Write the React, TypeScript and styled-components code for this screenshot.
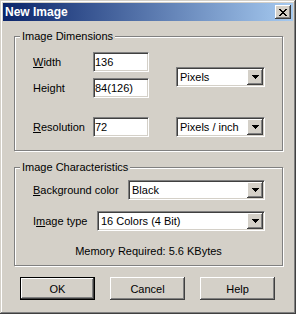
import React from "react";
import styled, { createGlobalStyle } from "styled-components";

const Global = createGlobalStyle`
  html, body { margin: 0; padding: 0; background: #D4D0C8; }
  body {
    font-family: "Liberation Sans", Arial, sans-serif;
    font-size: 11px;
    color: #000;
  }
`;

const raised = `
  box-shadow: inset -1px -1px #404040, inset 1px 1px #ffffff,
    inset -2px -2px #808080, inset 2px 2px #D4D0C8;
`;

const Window = styled.div`
  box-sizing: border-box;
  width: 296px;
  height: 314px;
  padding: 3px;
  background: #D4D0C8;
  box-shadow: inset -1px -1px #404040, inset 1px 1px #D4D0C8,
    inset -2px -2px #808080, inset 2px 2px #ffffff;
  display: flex;
  flex-direction: column;
`;

const TitleBar = styled.div`
  height: 18px;
  flex: none;
  display: flex;
  align-items: center;
  justify-content: space-between;
  padding: 0 2px;
  background: linear-gradient(to right, #0a246a, #a6caf0);
`;

const Title = styled.span`
  color: #fff;
  font-weight: bold;
  font-size: 12px;
  line-height: 14px;
`;

const CloseButton = styled.button`
  width: 16px;
  height: 14px;
  padding: 0;
  border: none;
  background: #D4D0C8;
  ${raised}
  display: flex;
  align-items: center;
  justify-content: center;
`;

const Body = styled.div`
  flex: 1;
  display: flex;
  flex-direction: column;
  padding: 9px 10px 0 11px;
`;

const Group = styled.fieldset<{ $gap?: number }>`
  margin: ${(p) => p.$gap ?? 0}px 0 0 0;
  padding: 0;
  min-width: 0;
  width: 269px;
  box-sizing: border-box;
  border: 1px solid #808080;
  box-shadow: inset 1px 1px #ffffff, 1px 1px #ffffff;
`;

const Legend = styled.legend`
  padding: 0 2px;
  margin-left: 5px;
  line-height: 13px;
  background: #D4D0C8;
`;

const DimGrid = styled.div`
  display: grid;
  grid-template-columns: 60px 56px 27px 89px;
  grid-template-rows: 20px 6px 20px 19px 20px;
  grid-template-areas:
    "wl wi . pc"
    ".  .  . pc"
    "hl hi . pc"
    ".  .  . ."
    "rl ri . rc";
  padding: 9px 0 13px 18px;
`;

const Cell = styled.div<{ $area: string }>`
  grid-area: ${(p) => p.$area};
  display: flex;
  align-items: center;
`;

const FloatCell = styled.div<{ $area: string; $top: number }>`
  grid-area: ${(p) => p.$area};
  align-self: start;
  margin-top: ${(p) => p.$top}px;
`;

const Label = styled.span`
  line-height: 13px;
  white-space: nowrap;
`;

const Key = styled.span`
  text-decoration: underline;
`;

const TextBox = styled.input`
  box-sizing: border-box;
  width: 56px;
  height: 20px;
  margin: 0;
  padding: 0 0 0 1px;
  font: inherit;
  color: #000;
  background: #fff;
  border: 1px solid;
  border-color: #808080 #fff #fff #808080;
  box-shadow: inset 1px 1px #404040, inset -1px -1px #D4D0C8;
  outline: none;
`;

const Combo = styled.div<{ $w: number }>`
  box-sizing: border-box;
  width: ${(p) => p.$w}px;
  height: 20px;
  background: #fff;
  border: 1px solid;
  border-color: #808080 #fff #fff #808080;
  box-shadow: inset 1px 1px #404040, inset -1px -1px #D4D0C8;
  padding: 1px 1px 1px 3px;
  display: flex;
  align-items: center;
  justify-content: space-between;
`;

const ComboText = styled.span`
  line-height: 13px;
  white-space: nowrap;
`;

const DropButton = styled.span`
  width: 16px;
  height: 16px;
  flex: none;
  background: #D4D0C8;
  ${raised}
  display: flex;
  align-items: center;
  justify-content: center;
`;

const CharBody = styled.div`
  padding: 6px 17px 7px 18px;
  display: flex;
  flex-direction: column;
`;

const CharRow = styled.div<{ $gap?: number }>`
  display: flex;
  align-items: center;
  justify-content: space-between;
  height: 20px;
  margin-top: ${(p) => p.$gap ?? 0}px;
`;

const Memory = styled.div`
  margin-top: 14px;
  line-height: 13px;
  text-align: center;
  margin-left: -18px;
  margin-right: -17px;
`;

const ButtonRow = styled.div`
  display: flex;
  gap: 15px;
  padding-left: 6px;
  margin-top: 11px;
`;

const PushButton = styled.button<{ $default?: boolean }>`
  box-sizing: border-box;
  width: 75px;
  height: 23px;
  margin: 0;
  padding: 0;
  font: inherit;
  color: #000;
  background: #D4D0C8;
  border: ${(p) => (p.$default ? "1px solid #000" : "none")};
  ${raised}
`;

const Arrow = () => (
  <svg width="7" height="4" viewBox="0 0 7 4" shapeRendering="crispEdges">
    <rect x="0" y="0" width="7" height="1" fill="#000" />
    <rect x="1" y="1" width="5" height="1" fill="#000" />
    <rect x="2" y="2" width="3" height="1" fill="#000" />
    <rect x="3" y="3" width="1" height="1" fill="#000" />
  </svg>
);

const CloseGlyph = () => (
  <svg width="8" height="7" viewBox="0 0 8 7" shapeRendering="crispEdges">
    {[
      [0, 0], [6, 0],
      [1, 1], [5, 1],
      [2, 2], [4, 2],
      [3, 3],
      [2, 4], [4, 4],
      [1, 5], [5, 5],
      [0, 6], [6, 6],
    ].map(([x, y], i) => (
      <rect key={i} x={x} y={y} width="2" height="1" fill="#000" />
    ))}
  </svg>
);

const Select = ({ width, value }: { width: number; value: string }) => (
  <Combo $w={width}>
    <ComboText>{value}</ComboText>
    <DropButton>
      <Arrow />
    </DropButton>
  </Combo>
);

export default function App() {
  return (
    <>
      <Global />
      <Window>
        <TitleBar>
          <Title>New Image</Title>
          <CloseButton aria-label="Close">
            <CloseGlyph />
          </CloseButton>
        </TitleBar>
        <Body>
          <Group>
            <Legend>Image Dimensions</Legend>
            <DimGrid>
              <Cell $area="wl">
                <Label>
                  <Key>W</Key>idth
                </Label>
              </Cell>
              <Cell $area="wi">
                <TextBox readOnly value="136" />
              </Cell>
              <Cell $area="hl">
                <Label>
                  Hei<Key>g</Key>ht
                </Label>
              </Cell>
              <Cell $area="hi">
                <TextBox readOnly value="84(126)" />
              </Cell>
              <FloatCell $area="pc" $top={15}>
                <Select width={89} value="Pixels" />
              </FloatCell>
              <Cell $area="rl">
                <Label>
                  <Key>R</Key>esolution
                </Label>
              </Cell>
              <Cell $area="ri">
                <TextBox readOnly value="72" />
              </Cell>
              <Cell $area="rc">
                <Select width={89} value="Pixels / inch" />
              </Cell>
            </DimGrid>
          </Group>
          <Group $gap={10}>
            <Legend>Image Characteristics</Legend>
            <CharBody>
              <CharRow>
                <Label>
                  <Key>B</Key>ackground color
                </Label>
                <Select width={137} value="Black" />
              </CharRow>
              <CharRow $gap={11}>
                <Label>
                  I<Key>m</Key>age type
                </Label>
                <Select width={168} value="16 Colors (4 Bit)" />
              </CharRow>
              <Memory>Memory Required: 5.6 KBytes</Memory>
            </CharBody>
          </Group>
          <ButtonRow>
            <PushButton $default>OK</PushButton>
            <PushButton>Cancel</PushButton>
            <PushButton>Help</PushButton>
          </ButtonRow>
        </Body>
      </Window>
    </>
  );
}
